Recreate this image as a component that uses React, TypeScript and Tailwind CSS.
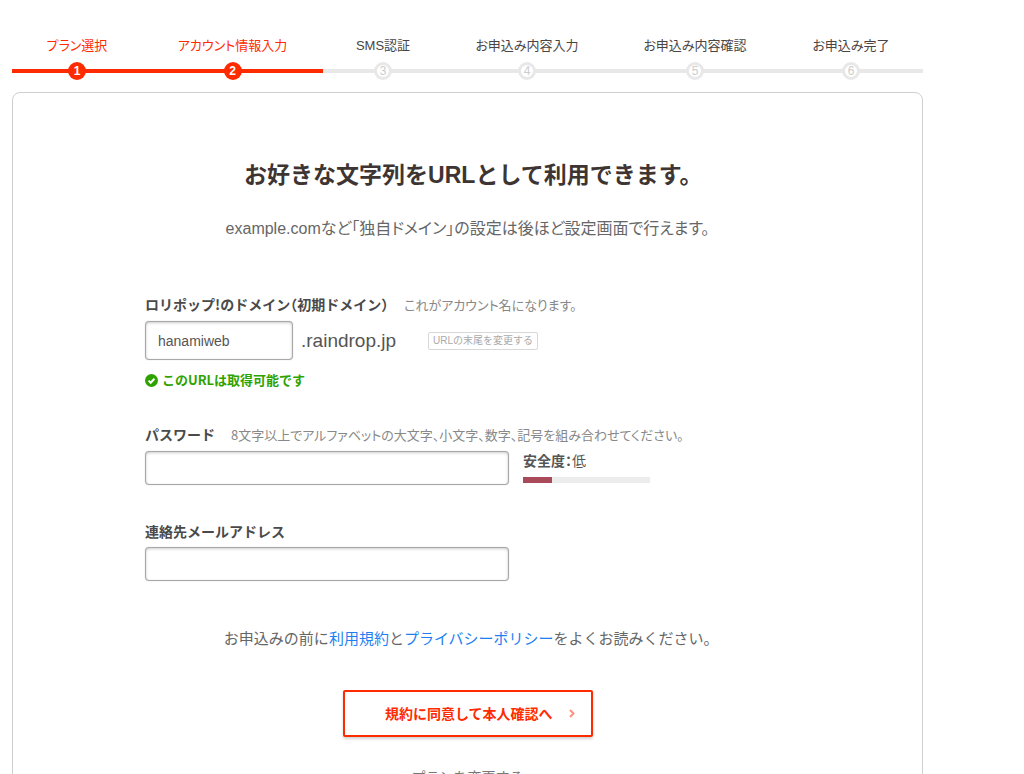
import React, { useState } from 'react';
import { clsx } from 'clsx';

const STEPS = [
  'プラン選択',
  'アカウント情報入力',
  'SMS認証',
  'お申込み内容入力',
  'お申込み内容確認',
  'お申込み完了',
];

const CURRENT_STEP = 2;

const inputClass =
  'rounded border border-[#a8a8a8] bg-white px-3 text-sm text-[#555] shadow-[inset_0_1px_3px_rgba(0,0,0,0.2),0_0_1px_rgba(0,0,0,0.3)] outline-none focus:border-[#888]';

const StepBar = () => (
  <ol className="grid grid-cols-[130fr_181fr_120fr_168fr_168fr_144fr] text-[13px] leading-5 [font-feature-settings:'palt']">
    {STEPS.map((label, index) => {
      const done = index < CURRENT_STEP;
      return (
        <li key={label} className={clsx('flex flex-col items-center', done ? 'text-[#ff2b00]' : 'text-[#4a4443]')}>
          <span className="whitespace-nowrap">{label}</span>
          {/* Line with the numbered circle on it */}
          <div className="mt-1.5 grid w-full place-items-center">
            <div className={clsx('col-start-1 row-start-1 h-1 w-full', done ? 'bg-[#ff2b00]' : 'bg-[#e8e8e8]')} />
            <span
              className={clsx(
                'col-start-1 row-start-1 flex size-[18px] items-center justify-center rounded-full text-xs leading-none',
                done ? 'bg-[#ff2b00] font-bold text-white' : 'border-3 border-[#e8e8e8] bg-white text-[#ccc]'
              )}
            >
              {index + 1}
            </span>
          </div>
        </li>
      );
    })}
  </ol>
);

const FieldLabel = ({ htmlFor, label, hint }: { htmlFor: string; label: string; hint?: string }) => (
  <div className="flex items-baseline gap-4 font-['Noto_Sans_CJK_JP',sans-serif] leading-5 whitespace-nowrap">
    <label htmlFor={htmlFor} className="text-sm leading-5 font-bold text-[#4a4a4a]">
      {label}
    </label>
    {hint && (
      <span className="text-[13px] leading-5 text-[#888] [font-feature-settings:'palt']">{hint}</span>
    )}
  </div>
);

const App = () => {
  const [account, setAccount] = useState('hanamiweb');
  const [password, setPassword] = useState('');
  const [email, setEmail] = useState('');
  const strength = 23;

  return (
    <div
      lang="ja"
      className="min-h-screen bg-white font-['Liberation_Sans','Noto_Sans_CJK_JP',sans-serif] [font-feature-settings:'halt']"
    >
      <div className="ml-3 max-w-[911px] pt-9">
        <StepBar />

        <main className="mt-3 rounded-lg border border-[#cfcfcf] px-[132px] pt-16 pb-10">
          <h1 className="text-center text-[23px] leading-9 font-bold whitespace-nowrap text-[#3e3533]">
            お好きな文字列をURLとして利用できます。
          </h1>
          <p className="mt-6 text-center text-base leading-6 whitespace-nowrap text-[#666] [font-feature-settings:'palt']">
            example.comなど「独自ドメイン」の設定は後ほど設定画面で行えます。
          </p>

          <form className="mt-[53px]" onSubmit={(e) => e.preventDefault()}>
            {/* Domain */}
            <FieldLabel
              htmlFor="account"
              label="ロリポップ!のドメイン（初期ドメイン）"
              hint="これがアカウント名になります。"
            />
            <div className="mt-1.5 flex items-center">
              <input
                id="account"
                type="text"
                value={account}
                onChange={(e) => setAccount(e.target.value)}
                className={clsx(inputClass, 'h-[39px] w-[148px]')}
              />
              <span className="ml-2 text-[19px] leading-6 text-[#555]">.raindrop.jp</span>
              <button
                type="button"
                className="ml-8 rounded-xs border border-[#d8d8d8] px-1 text-[10px] leading-4 text-[#aaa]"
              >
                URLの末尾を変更する
              </button>
            </div>
            <p className="mt-2.5 flex items-center gap-1 font-['Noto_Sans_CJK_JP',sans-serif] text-[13px] leading-5 font-bold text-[#2ea300]">
              <svg viewBox="0 0 13 13" className="size-[13px]" aria-hidden="true">
                <circle cx="6.5" cy="6.5" r="6.5" fill="currentColor" />
                <path d="M3.6 6.6l2.1 2.1 3.7-3.9" fill="none" stroke="#fff" strokeWidth="2" />
              </svg>
              このURLは取得可能です
            </p>

            {/* Password */}
            <div className="mt-[34px]">
              <FieldLabel
                htmlFor="password"
                label="パスワード"
                hint="8文字以上でアルファベットの大文字、小文字、数字、記号を組み合わせてください。"
              />
              <div className="mt-1.5 flex gap-3.5">
                <input
                  id="password"
                  type="password"
                  value={password}
                  onChange={(e) => setPassword(e.target.value)}
                  className={clsx(inputClass, 'h-[34px] w-[364px]')}
                />
                <div className="w-[127px] text-[#555]">
                  <p className="text-sm leading-5">
                    <span className="font-bold">安全度：</span>低
                  </p>
                  <div className="mt-1.5 h-1.5 bg-[#ececec]">
                    <div className="h-full bg-[#a94a5a]" style={{ width: `${strength}%` }} />
                  </div>
                </div>
              </div>
            </div>

            {/* Email */}
            <div className="mt-9">
              <FieldLabel htmlFor="email" label="連絡先メールアドレス" />
              <input
                id="email"
                type="email"
                value={email}
                onChange={(e) => setEmail(e.target.value)}
                className={clsx(inputClass, 'mt-1.5 block h-[34px] w-[364px]')}
              />
            </div>

            <p className="mt-[46px] text-center text-[15px] leading-6 whitespace-nowrap text-[#666]">
              お申込みの前に
              <a href="#terms" className="text-[#1f7ff0]">利用規約</a>と
              <a href="#privacy" className="text-[#1f7ff0]">プライバシーポリシー</a>
              をよくお読みください。
            </p>

            <div className="mt-[39px] flex flex-col items-center">
              <button
                type="submit"
                className="flex h-[47px] w-[250px] items-center justify-end gap-4 rounded-xs border-2 border-[#ff2b00] bg-white pr-4 text-sm font-bold text-[#ff2b00] shadow-[0_2px_3px_rgba(0,0,0,0.18)]"
              >
                規約に同意して本人確認へ
                <svg viewBox="0 0 6 9" className="h-[9px] w-1.5" aria-hidden="true">
                  <path d="M1 1l3.5 3.5L1 8" fill="none" stroke="#ff9180" strokeWidth="2" />
                </svg>
              </button>
              <a href="#plan" className="mt-7 text-sm leading-6 text-[#777]">
                プランを変更する
              </a>
            </div>
          </form>
        </main>
      </div>
    </div>
  );
};

export default App;
